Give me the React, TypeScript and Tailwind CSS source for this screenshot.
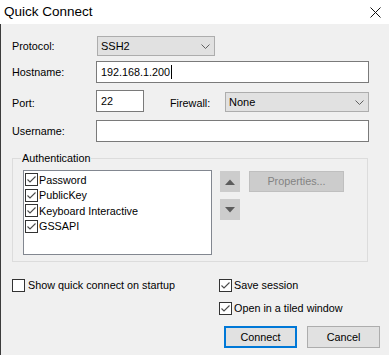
import React from "react";

const font = { fontFamily: '"Liberation Sans", Arial, sans-serif' };

// Windows-style 13px checkbox
const CheckBox = ({ checked }: { checked: boolean }) => (
  <svg width="13" height="13" viewBox="0 0 13 13" className="shrink-0">
    <rect x="0.5" y="0.5" width="12" height="12" fill="#ffffff" stroke="#333333" />
    {checked && (
      <path d="M2.5 6.5 L5 9 L10.5 3.5" fill="none" stroke="#4a4a4a" strokeWidth="1.1" />
    )}
  </svg>
);

const Chevron = () => (
  <svg width="9" height="5" viewBox="0 0 9 5" className="shrink-0">
    <path d="M0.5 0.5 L4.5 4.5 L8.5 0.5" fill="none" stroke="#606060" strokeWidth="1" />
  </svg>
);

const Select = ({ value, width }: { value: string; width: string }) => (
  <div
    className={`${width} h-[20px] flex items-center justify-between pl-[3px] pr-[4px] bg-[#e1e1e1] border border-[#adadad] text-[11px] text-black`}
  >
    <span>{value}</span>
    <Chevron />
  </div>
);

export default function App() {
  const authMethods = ["Password", "PublicKey", "Keyboard Interactive", "GSSAPI"];

  return (
    <div className="w-[389px] h-[355px] bg-[#f0f0f0] text-black overflow-hidden" style={font}>
      {/* Title bar */}
      <div className="h-[24px] bg-white flex items-center justify-between pl-[4px] pr-[8px]">
        <span className="text-[13.5px] text-black">Quick Connect</span>
        <svg width="11" height="11" viewBox="0 0 11 11">
          <path d="M0.5 0.5 L10.5 10.5 M10.5 0.5 L0.5 10.5" stroke="#111111" strokeWidth="1" />
        </svg>
      </div>

      {/* Body */}
      <div className="h-[331px] border-l border-[#3c3c3c] pl-[11px] pr-[20px] pt-[12px] text-[10.8px]">
        {/* Protocol */}
        <div className="flex items-center h-[20px]">
          <span className="w-[85px]">Protocol:</span>
          <Select value="SSH2" width="w-[118px]" />
        </div>

        {/* Hostname */}
        <div className="flex items-center h-[22px] mt-[5px]">
          <span className="w-[84px]">Hostname:</span>
          <div className="w-[273px] h-[22px] bg-white border border-[#7a7a7a] flex items-center pl-[4px]">
            <span>192.168.1.200</span>
            <span className="w-px h-[14px] bg-black ml-[1px]" />
          </div>
        </div>

        {/* Port / Firewall */}
        <div className="flex items-start h-[23px] mt-[7px]">
          <span className="w-[84px] self-center mt-[4px]">Port:</span>
          <div className="w-[48px] h-[22px] bg-white border border-[#7a7a7a] flex items-center pl-[4px]">
            22
          </div>
          <span className="ml-[26px] w-[55px] self-center mt-[4px]">Firewall:</span>
          <div className="mt-[2px]">
            <Select value="None" width="w-[144px]" />
          </div>
        </div>

        {/* Username */}
        <div className="flex items-center h-[22px] mt-[7px]">
          <span className="w-[84px]">Username:</span>
          <div className="w-[273px] h-[22px] bg-white border border-[#7a7a7a]" />
        </div>

        {/* Authentication group */}
        <div className="relative mt-[16px] w-[356px] h-[104px] border border-[#dcdcdc] pt-[11px] pl-[10px] flex items-start">
          <span className="absolute left-[8px] top-[-8px] px-[1px] bg-[#f0f0f0] leading-[14px]">
            Authentication
          </span>
          <div className="w-[189px] h-[85px] bg-white border border-[#828790] pt-[1px] pl-[1px] flex flex-col">
            {authMethods.map((m) => (
              <div key={m} className="flex items-center h-[15.5px] gap-[1px]">
                <CheckBox checked />
                <span>{m}</span>
              </div>
            ))}
          </div>
          <div className="flex flex-col gap-[7px] ml-[8px] mt-[1px]">
            <div className="w-[20px] h-[21px] bg-[#cccccc] flex items-center justify-center">
              <svg width="10" height="6" viewBox="0 0 10 6">
                <path d="M0 6 L5 0.5 L10 6 Z" fill="#5c5c5c" />
              </svg>
            </div>
            <div className="w-[20px] h-[21px] bg-[#cccccc] flex items-center justify-center">
              <svg width="10" height="6" viewBox="0 0 10 6">
                <path d="M0 0 L5 5.5 L10 0 Z" fill="#5c5c5c" />
              </svg>
            </div>
          </div>
          <div className="ml-[9px] mt-[1px] w-[95px] h-[21px] bg-[#cccccc] border border-[#bfbfbf] flex items-center justify-center text-[#838383]">
            Properties...
          </div>
        </div>

        {/* Options */}
        <div className="flex mt-[16px]">
          <div className="w-[207px] flex items-center h-[14px] gap-[3px]">
            <CheckBox checked={false} />
            <span>Show quick connect on startup</span>
          </div>
          <div className="flex flex-col gap-[9px]">
            <div className="flex items-center h-[14px] gap-[2px]">
              <CheckBox checked />
              <span>Save session</span>
            </div>
            <div className="flex items-center h-[14px] gap-[2px]">
              <CheckBox checked />
              <span>Open in a tiled window</span>
            </div>
          </div>
        </div>

        {/* Buttons */}
        <div className="flex justify-end gap-[10px] mt-[11px] mr-[-11px]">
          <button className="w-[73px] h-[22px] bg-[#e1e1e1] border-2 border-[#0078d7] text-[10.8px] text-black">
            Connect
          </button>
          <button className="w-[73px] h-[22px] bg-[#e1e1e1] border border-[#adadad] text-[10.8px] text-black">
            Cancel
          </button>
        </div>
      </div>
    </div>
  );
}
